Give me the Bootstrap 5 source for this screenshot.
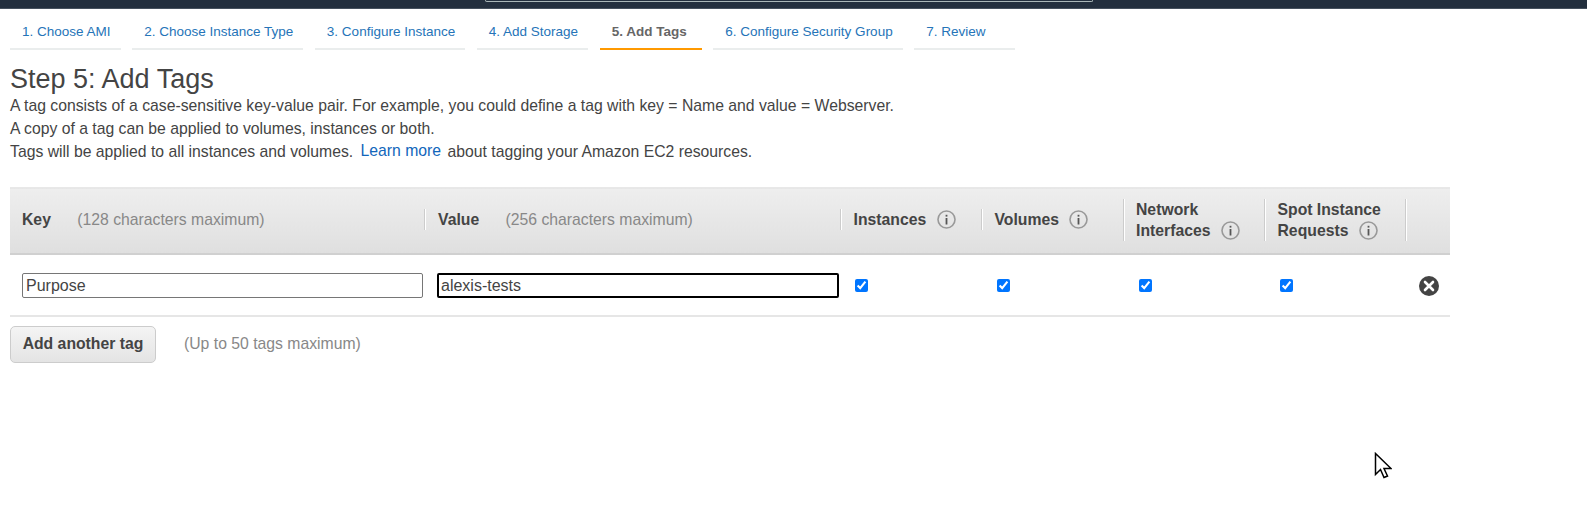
<!DOCTYPE html>
<html lang="en">
<head>
    <meta charset="UTF-8">
    <title>Add Tags</title>
    <link href="https://cdn.jsdelivr.net/npm/bootstrap@5.3.0/dist/css/bootstrap.min.css" rel="stylesheet">
    <style>
        body {
            font-family: "Liberation Sans", Arial, sans-serif;
            font-size: 14px;
            color: #444;
            background: #fff;
            overflow: hidden;
        }
        .top-strip {
            height: 9px;
            background: #232f3e;
            border-bottom: 1px solid #46515e;
            overflow: hidden;
        }
        .top-search {
            width: 608px;
            height: 2px;
            margin-left: 485px;
            border: 1px solid #aab7b8;
            border-top: 0;
            border-radius: 0 0 2px 2px;
        }
        .wizard-tabs {
            gap: 11.6px;
            padding: 8px 10px 0;
        }
        .wizard-tab {
            display: block;
            min-width: 101px;
            padding: 7px 10px 8px 12px;
            line-height: 16px;
            font-size: 13.5px;
            color: #2574b8;
            text-decoration: none;
            border-bottom: 2px solid #eaeded;
            white-space: nowrap;
        }
        .wizard-tab.on {
            min-width: 102px;
            color: #666;
            font-weight: 700;
            border-bottom-color: #ff9900;
        }
        .step-title {
            font-size: 27px;
            line-height: 30px;
            font-weight: 400;
            color: #444;
            margin: 14px 0 0 10px;
        }
        .step-intro {
            margin: 0 0 0 10px;
            font-size: 15.75px;
            line-height: 23px;
            color: #444;
        }
        .step-intro a {
            position: relative;
            top: -1px;
            color: #1166bb;
            text-decoration: none;
            margin: 0 2px 0 3px;
        }
        .tag-grid {
            width: 1440px;
            margin: 24px 0 0 10px;
            table-layout: fixed;
            border-collapse: collapse;
        }
        .w-text { width: 415px; }
        .w-text-b { width: 416px; }
        .w-flag { width: 141px; }
        .w-flag-b { width: 141.5px; }
        .w-end { width: 44px; }
        .tag-grid th {
            height: 66px;
            padding: 0;
            background: linear-gradient(#eeeeee, #dfdfdf);
            border-top: 1px solid #e8e8e8;
            border-bottom: 2px solid #d0d0d0;
            font-size: 15.75px;
            line-height: 21px;
            font-weight: 700;
            color: #444;
        }
        .head-cell {
            border-left: 1px solid #fff;
            box-shadow: -1px 0 0 #ccc;
            padding-left: 11.5px;
            min-height: 21px;
            margin-bottom: 2px;
        }
        .head-cell.tall {
            height: 42px;
            margin-bottom: 0;
        }
        .head-cell.wide-pad {
            padding-left: 12px;
        }
        .no-rule {
            border-left: 0;
            box-shadow: none;
        }
        .head-note {
            font-weight: 400;
            color: #888;
            margin-left: 22px;
        }
        .info-dot {
            display: inline-block;
            width: 19px;
            height: 19px;
            margin-left: 6px;
            vertical-align: -4px;
        }
        .tag-grid td {
            height: 62px;
            padding: 2px 0 0 15px;
            border-bottom: 2px solid #e6e6e6;
            vertical-align: middle;
        }
        .tag-grid td.field-cell {
            padding-left: 12px;
        }
        .tag-grid td.first-flag {
            padding-left: 14px;
        }
        .tag-input {
            display: block;
            width: 401px;
            height: 25px;
            padding: 0 3px;
            font-size: 16px;
            font-family: "Liberation Sans", Arial, sans-serif;
            color: #444;
            border: 1px solid #767676;
            border-radius: 2px;
            outline: 0;
            background: #fff;
        }
        .tag-input.focused {
            width: 402px;
            border: 2px solid #000;
            padding: 0 2px;
        }
        .tag-check {
            display: block;
            width: 13px;
            height: 13px;
            margin: 0;
            accent-color: #0075ff;
        }
        .remove-tag {
            display: block;
            margin: 1px 0 0 -2px;
        }
        .add-row {
            margin: 9px 0 0 10px;
        }
        .add-btn {
            height: 37px;
            width: 146px;
            padding: 0;
            font-size: 15.75px;
            font-weight: 700;
            color: #444;
            background: linear-gradient(#f4f4f4, #e4e4e4);
            border: 1px solid #ccc;
            border-radius: 5px;
        }
        .add-note {
            margin-left: 28px;
            font-size: 15.75px;
            color: #888;
        }
        .mouse-pointer {
            position: absolute;
            left: 1374px;
            top: 452px;
        }
    </style>
</head>
<body>
    <div class="top-strip"><div class="top-search"></div></div>

    <nav class="d-flex wizard-tabs">
        <a class="wizard-tab" href="#">1. Choose AMI</a>
        <a class="wizard-tab" href="#">2. Choose Instance Type</a>
        <a class="wizard-tab" href="#">3. Configure Instance</a>
        <a class="wizard-tab" href="#">4. Add Storage</a>
        <a class="wizard-tab on" href="#">5. Add Tags</a>
        <a class="wizard-tab" href="#">6. Configure Security Group</a>
        <a class="wizard-tab" href="#">7. Review</a>
    </nav>

    <h1 class="step-title">Step 5: Add Tags</h1>
    <div class="step-intro">
        A tag consists of a case-sensitive key-value pair. For example, you could define a tag with key = Name and value = Webserver.<br>
        A copy of a tag can be applied to volumes, instances or both.<br>
        Tags will be applied to all instances and volumes. <a href="#">Learn more</a> about tagging your Amazon EC2 resources.
    </div>

    <table class="tag-grid">
        <colgroup>
            <col class="w-text"><col class="w-text-b"><col class="w-flag"><col class="w-flag-b"><col class="w-flag-b"><col class="w-flag"><col class="w-end">
        </colgroup>
        <thead>
            <tr>
                <th><div class="head-cell wide-pad no-rule">Key <span class="head-note">(128 characters maximum)</span></div></th>
                <th><div class="head-cell wide-pad">Value <span class="head-note">(256 characters maximum)</span></div></th>
                <th><div class="head-cell">Instances <svg class="info-dot" viewBox="0 0 19 19"><circle cx="9.5" cy="9.5" r="8.5" fill="none" stroke="#999" stroke-width="1.6"/><rect x="8.6" y="8" width="1.8" height="6.5" fill="#555"/><rect x="8.6" y="4.8" width="1.8" height="1.8" fill="#555"/></svg></div></th>
                <th><div class="head-cell">Volumes <svg class="info-dot" viewBox="0 0 19 19"><circle cx="9.5" cy="9.5" r="8.5" fill="none" stroke="#999" stroke-width="1.6"/><rect x="8.6" y="8" width="1.8" height="6.5" fill="#555"/><rect x="8.6" y="4.8" width="1.8" height="1.8" fill="#555"/></svg></div></th>
                <th><div class="head-cell tall">Network<br>Interfaces <svg class="info-dot" viewBox="0 0 19 19"><circle cx="9.5" cy="9.5" r="8.5" fill="none" stroke="#999" stroke-width="1.6"/><rect x="8.6" y="8" width="1.8" height="6.5" fill="#555"/><rect x="8.6" y="4.8" width="1.8" height="1.8" fill="#555"/></svg></div></th>
                <th><div class="head-cell tall">Spot Instance<br>Requests <svg class="info-dot" viewBox="0 0 19 19"><circle cx="9.5" cy="9.5" r="8.5" fill="none" stroke="#999" stroke-width="1.6"/><rect x="8.6" y="8" width="1.8" height="6.5" fill="#555"/><rect x="8.6" y="4.8" width="1.8" height="1.8" fill="#555"/></svg></div></th>
                <th><div class="head-cell tall"></div></th>
            </tr>
        </thead>
        <tbody>
            <tr>
                <td class="field-cell"><input class="tag-input" value="Purpose"></td>
                <td class="field-cell"><input class="tag-input focused" value="alexis-tests"></td>
                <td class="first-flag"><input class="tag-check" type="checkbox" checked></td>
                <td><input class="tag-check" type="checkbox" checked></td>
                <td><input class="tag-check" type="checkbox" checked></td>
                <td><input class="tag-check" type="checkbox" checked></td>
                <td>
                    <svg class="remove-tag" width="20" height="20" viewBox="0 0 20 20"><circle cx="10" cy="10" r="10" fill="#444"/><path d="M6 6l8 8M14 6l-8 8" stroke="#fff" stroke-width="2.6" stroke-linecap="round"/></svg>
                </td>
            </tr>
        </tbody>
    </table>

    <div class="add-row d-flex align-items-center">
        <button class="add-btn" type="button">Add another tag</button>
        <span class="add-note">(Up to 50 tags maximum)</span>
    </div>

    <svg class="mouse-pointer" width="18" height="28" viewBox="0 0 18 28"><path d="M1.5 1.5v21l5-5 3.5 8 3.5-1.5-3.5-7.500h7z" fill="#fff" stroke="#000" stroke-width="1.500"/></svg>

    <script src="https://cdn.jsdelivr.net/npm/bootstrap@5.3.0/dist/js/bootstrap.bundle.min.js"></script>
</body>
</html>
